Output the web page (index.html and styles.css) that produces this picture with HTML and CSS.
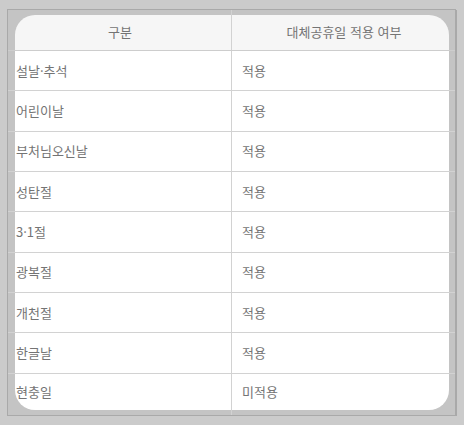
FILE: index.html
```html
<!DOCTYPE html>
<html lang="ko">
<head>
<meta charset="utf-8">
<link rel="stylesheet" href="styles.css">
</head>
<body>
<div class="frame">
  <div class="row head">
    <div class="cell c1">구분</div>
    <div class="cell c2">대체공휴일 적용 여부</div>
  </div>
  <div class="row"><div class="cell c1">설날·추석</div><div class="cell c2">적용</div></div>
  <div class="row"><div class="cell c1">어린이날</div><div class="cell c2">적용</div></div>
  <div class="row"><div class="cell c1">부처님오신날</div><div class="cell c2">적용</div></div>
  <div class="row"><div class="cell c1">성탄절</div><div class="cell c2">적용</div></div>
  <div class="row"><div class="cell c1">3·1절</div><div class="cell c2">적용</div></div>
  <div class="row"><div class="cell c1">광복절</div><div class="cell c2">적용</div></div>
  <div class="row"><div class="cell c1">개천절</div><div class="cell c2">적용</div></div>
  <div class="row"><div class="cell c1">한글날</div><div class="cell c2">적용</div></div>
  <div class="row last"><div class="cell c1">현충일</div><div class="cell c2">미적용</div></div>
</div>
</body>
</html>
```

FILE: styles.css
```css
html, body {
  margin: 0;
  padding: 0;
  background: #cbcbcb;
}
body {
  font-family: "Noto Sans CJK KR", "Noto Sans", sans-serif;
  font-size: 13px;
  color: #747474;
}
.frame {
  box-sizing: border-box;
  margin: 9px 0 0 7px;
  width: 449px;
  height: 407px;
  border: 1px solid #a9a9a9;
  box-shadow: 1px 1px 0 #a9a9a9;
  padding: 5px 0;
  background: linear-gradient(to right, #c4c4c4 223px, #d2d2d2 223px, #d2d2d2 224px, #c4c4c4 224px);
  display: flex;
  flex-direction: column;
}
.row {
  display: grid;
  grid-template-columns: 223px 224px;
  height: 40.33px;
  box-sizing: border-box;
  border-bottom: 1px solid #d2d2d2;
}
.row.head {
  height: 36px;
  border-bottom-color: #cdcdcd;
}
.row.last {
  border-bottom: none;
  flex: 1;
  height: auto;
}
.cell {
  display: flex;
  align-items: center;
  background: #fff;
  line-height: 1;
  padding-bottom: 1px;
}
.c1 {
  margin-left: 7px;
  padding-left: 1px;
}
.c2 {
  border-left: 1px solid #d2d2d2;
  margin-right: 6px;
  padding-left: 10px;
}
.head .cell {
  background: #f6f6f6;
  justify-content: center;
  padding-bottom: 3px;
}
.head .c1 {
  border-top-left-radius: 20px;
  padding-left: 0;
  padding-right: 6px;
}
.head .c2 {
  border-top-right-radius: 20px;
  padding-left: 7px;
}
.last .c1 { border-bottom-left-radius: 20px; }
.last .c2 { border-bottom-right-radius: 20px; }
```
